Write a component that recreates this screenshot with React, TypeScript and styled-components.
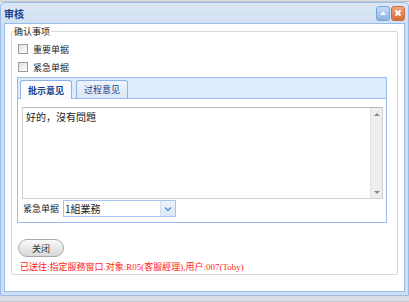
import React from 'react'
import styled, { createGlobalStyle } from 'styled-components'

const GlobalStyle = createGlobalStyle`
  html, body {
    margin: 0;
    padding: 0;
    background: #ffffff;
  }
  body {
    font-family: "Noto Sans CJK SC", "Liberation Sans", sans-serif;
  }
`

const Screen = styled.div`
  width: 409px;
  height: 302px;
  display: flex;
  flex-direction: column;
  background: #eef1f5;
  overflow: hidden;
`
const Strip = styled.div<{ $h: number }>`
  height: ${p => p.$h}px;
  flex: none;
  background: #d9dde3;
  border-bottom: 1px solid #c3c8cf;
  box-sizing: border-box;
`
const Window = styled.div`
  height: 294px;
  flex: none;
  box-sizing: border-box;
  border: 1px solid #99bbe8;
  border-radius: 4px 4px 0 0;
  background: linear-gradient(#dde8f5, #cfdff2 24px, #cfdff2);
  padding: 0 3px 3px;
  display: flex;
  flex-direction: column;
`
const Header = styled.div`
  height: 20px;
  flex: none;
  display: flex;
  align-items: center;
  justify-content: space-between;
  padding-left: 0;
  font-size: 10px;
  font-weight: bold;
  color: #15428b;
`
const Tools = styled.div`
  display: flex;
  gap: 1px;
`
const Tool = styled.div<{ $kind: 'min' | 'close' }>`
  width: 12px;
  height: 13px;
  border-radius: 3px;
  border: 1px solid ${p => (p.$kind === 'close' ? '#c0703f' : '#7da3d6')};
  background: ${p =>
    p.$kind === 'close'
      ? 'linear-gradient(#f2a883, #d8693a)'
      : 'linear-gradient(#c6dcf6, #88b2e6)'};
  display: flex;
  align-items: center;
  justify-content: center;
`
const Body = styled.div`
  flex: 1;
  background: #ffffff;
  border: 1px solid #99bbe8;
  padding: 0 6px 16px 6px;
  display: flex;
  flex-direction: column;
`
const Fieldset = styled.fieldset`
  margin: 2px 0 0;
  padding: 3px 10px 0 5px;
  border: 1px solid #d4d8de;
  border-radius: 2px;
  flex: 1;
  min-width: 0;
  display: flex;
  flex-direction: column;
`
const Legend = styled.legend`
  font-size: 9px;
  color: #222;
  padding: 0 1px;
  margin-left: -4px;
  line-height: 11px;
`
const CheckRow = styled.label`
  height: 18px;
  display: flex;
  align-items: center;
  gap: 5px;
  padding-left: 1px;
  font-size: 9px;
  color: #222;
`
const Box = styled.span`
  width: 8px;
  height: 8px;
  border: 1px solid #9a9a9a;
  background: linear-gradient(135deg, #e0e0e0, #ffffff);
`
const TabPanel = styled.div`
  margin-top: 1px;
  border: 1px solid #99bbe8;
  display: flex;
  flex-direction: column;
`
const TabStrip = styled.div`
  height: 21px;
  box-sizing: border-box;
  background: #deecfd;
  border-bottom: 1px solid #99bbe8;
  display: flex;
  align-items: flex-end;
  gap: 4px;
  padding-left: 2px;
`
const Tab = styled.div<{ $active?: boolean }>`
  width: 52px;
  height: ${p => (p.$active ? 19 : 18)}px;
  box-sizing: border-box;
  border: 1px solid #8db2e3;
  border-bottom: none;
  border-radius: 3px 3px 0 0;
  margin-bottom: ${p => (p.$active ? -1 : 0)}px;
  background: ${p => (p.$active ? 'linear-gradient(#ffffff, #f6f9fd)' : 'linear-gradient(#eef4fc, #dbe7f7)')};
  display: flex;
  align-items: center;
  justify-content: center;
  font-size: 9px;
  font-weight: ${p => (p.$active ? 'bold' : 'normal')};
  color: #15428b;
`
const TabBody = styled.div`
  padding: 8px 3px 5px 4px;
  display: flex;
  flex-direction: column;
  gap: 1px;
`
const TextArea = styled.div`
  height: 92px;
  box-sizing: border-box;
  border: 1px solid #d0d0d0;
  border-top-color: #b8b8b8;
  display: flex;
`
const TextContent = styled.div`
  flex: 1;
  padding: 2px 3px;
  font-size: 10px;
  line-height: 14px;
  color: #222;
`
const ScrollBar = styled.div`
  width: 11px;
  background: #eeeeee;
  border-left: 1px solid #e2e2e2;
  display: flex;
  flex-direction: column;
  justify-content: space-between;
  align-items: center;
  padding: 5px 0 4px;
`
const Arrow = styled.span<{ $up?: boolean }>`
  width: 0;
  height: 0;
  border-left: 3px solid transparent;
  border-right: 3px solid transparent;
  ${p => (p.$up ? 'border-bottom: 3px solid #8a8a8a;' : 'border-top: 3px solid #8a8a8a;')}
`
const ComboRow = styled.div`
  display: flex;
  align-items: center;
  gap: 4px;
  padding-left: 1px;
  font-size: 9px;
  color: #222;
  height: 17px;
`
const Combo = styled.div`
  width: 113px;
  height: 17px;
  box-sizing: border-box;
  border: 1px solid #a8c4ea;
  display: flex;
  background: #fff;
`
const ComboText = styled.div`
  flex: 1;
  font-size: 10px;
  line-height: 15px;
  padding-left: 1px;
  color: #222;
`
const Trigger = styled.div`
  width: 14px;
  background: linear-gradient(#edf3fb, #dde8f6);
  border-left: 1px solid #d2e0f2;
  display: flex;
  align-items: center;
  justify-content: center;
`
const Footer = styled.div`
  padding: 16px 0 0 3px;
  display: flex;
  flex-direction: column;
  align-items: flex-start;
  gap: 4px;
`
const PillButton = styled.button`
  width: 46px;
  height: 18px;
  margin-left: -2px;
  border: 1px solid #a9a9a9;
  border-radius: 9px;
  background: linear-gradient(#fbfbfb, #e6e6e6 55%, #d8d8d8);
  font-family: "Noto Sans CJK SC", sans-serif;
  font-size: 9px;
  color: #333;
  padding: 0;
`
const Notice = styled.div`
  font-family: "Liberation Serif", "Noto Sans CJK SC", serif;
  font-size: 9px;
  line-height: 12px;
  color: #ff1a1a;
  white-space: nowrap;
`

export default function App() {
  return (
    <Screen>
      <GlobalStyle />
      <Strip $h={2} />
      <Window>
        <Header>
          <span>审核</span>
          <Tools>
            <Tool $kind="min">
              <svg width="8" height="6" viewBox="0 0 8 6">
                <path d="M1 5 L4 1.5 L7 5 Z" fill="#ffffff" />
              </svg>
            </Tool>
            <Tool $kind="close">
              <svg width="8" height="8" viewBox="0 0 8 8">
                <path d="M1.5 1.5 L6.5 6.5 M6.5 1.5 L1.5 6.5" stroke="#ffffff" strokeWidth="2" />
              </svg>
            </Tool>
          </Tools>
        </Header>
        <Body>
          <Fieldset>
            <Legend>确认事项</Legend>
            <CheckRow><Box />重要单据</CheckRow>
            <CheckRow><Box />紧急单据</CheckRow>
            <TabPanel>
              <TabStrip>
                <Tab $active>批示意见</Tab>
                <Tab>过程意见</Tab>
              </TabStrip>
              <TabBody>
                <TextArea>
                  <TextContent>好的，沒有問題</TextContent>
                  <ScrollBar>
                    <Arrow $up />
                    <Arrow />
                  </ScrollBar>
                </TextArea>
                <ComboRow>
                  紧急单据
                  <Combo>
                    <ComboText>1組業務</ComboText>
                    <Trigger>
                      <svg width="8" height="6" viewBox="0 0 8 6">
                        <path d="M1 1.5 L4 4.5 L7 1.5" fill="none" stroke="#5a8fd6" strokeWidth="1.5" />
                      </svg>
                    </Trigger>
                  </Combo>
                </ComboRow>
              </TabBody>
            </TabPanel>
            <Footer>
              <PillButton>关闭</PillButton>
              <Notice>已送往:指定服務窗口.对象:R05(客服經理),用户:007(Toby)</Notice>
            </Footer>
          </Fieldset>
        </Body>
      </Window>
      <Strip $h={6} />
    </Screen>
  )
}
